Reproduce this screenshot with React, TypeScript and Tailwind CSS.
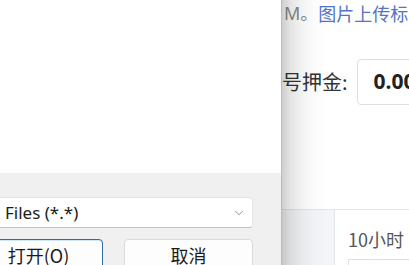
import { ChevronDown } from 'lucide-react'

const ui = { fontFamily: '"Noto Sans", "Noto Sans CJK SC", sans-serif' }
const cjk = { fontFamily: '"Noto Sans CJK SC", "Noto Sans", sans-serif' }

function FileDialog() {
    return (
        <div className="relative z-10 flex w-[282px] shrink-0 flex-col border-r border-[#bcbcbc] bg-[#f0f0f0]" style={ui}>
            {/* file list area */}
            <div className="h-[173px] shrink-0 bg-white"></div>

            {/* footer */}
            <div className="flex shrink-0 flex-col pr-[28px] pt-[24px]">
                <div className="-ml-[8px] flex h-[31px] items-center justify-between rounded-[4px] border border-[#e3e3e3] border-b-[#c2c2c2] bg-white pl-[12px] pr-[6px]">
                    <span className="text-[17px] leading-none text-[#1b1b1b]">Files (*.*)</span>
                    <ChevronDown className="h-[14px] w-[14px] text-[#6a6a6a]" strokeWidth={1.25} />
                </div>

                <div className="mt-[11px] flex gap-[21px]">
                    <button className="-ml-[26px] flex h-[33px] w-[129px] items-center justify-center rounded-[4px] border border-[#2f6f9c] bg-[#fdfdfd] shadow-[inset_0_1px_0_#cfe6f7] text-[18px] text-[#1b1b1b]" style={cjk}>
                        打开(O)
                    </button>
                    <button className="flex h-[33px] w-[129px] items-center justify-center rounded-[4px] border border-[#dadada] bg-[#fdfdfd] text-[18px] text-[#1b1b1b]" style={cjk}>
                        取消
                    </button>
                </div>
            </div>
        </div>
    )
}

function WebPage() {
    return (
        <div className="relative flex-1 overflow-hidden bg-white" style={cjk}>
            {/* upload hint */}
            <div className="flex h-[26px] items-center whitespace-nowrap pl-[2px] text-[18px]">
                <span className="text-[#8a8a8a]" style={ui}>M。</span>
                <span className="text-[#5674c4]">图片上传标</span>
            </div>

            {/* deposit row */}
            <div className="mt-[33px] flex h-[46px] items-center whitespace-nowrap">
                <span className="text-[20px] text-[#333]">号押金:</span>
                <div className="ml-[9px] flex h-[46px] w-[120px] shrink-0 items-center rounded-[4px] border border-[#dcdfe6] pl-[16px]">
                    <span className="text-[21px] font-bold text-[#222]" style={ui}>0.00</span>
                </div>
            </div>

            {/* table */}
            <div className="mt-[104px] flex h-[80px] border-t border-[#e2e6ec]">
                <div className="flex w-[52px] shrink-0 flex-col justify-end bg-[#f3f5f8]">
                    <div className="h-[8px] w-[39px] border-t border-r border-[#dcdfe6] bg-white"></div>
                </div>
                <div className="flex flex-1 flex-col border-l border-[#e2e6ec] pl-[13px] pt-[17px]">
                    <span className="whitespace-nowrap text-[18px] leading-[24px] text-[#555]">10小时</span>
                    <div className="mt-[8px] h-[10px] border-t border-l border-[#dcdfe6] bg-white"></div>
                </div>
            </div>

            {/* dialog shadow over the page */}
            <div className="pointer-events-none absolute inset-y-0 left-0 w-[50px] bg-[linear-gradient(to_right,rgba(0,0,0,0.19),rgba(0,0,0,0.11)_8px,rgba(0,0,0,0.05)_19px,rgba(0,0,0,0.015)_32px,transparent_48px)]"></div>
        </div>
    )
}

export default function App() {
    return (
        <div className="flex h-[265px] w-[409px] overflow-hidden bg-white">
            <FileDialog />
            <WebPage />
        </div>
    )
}
